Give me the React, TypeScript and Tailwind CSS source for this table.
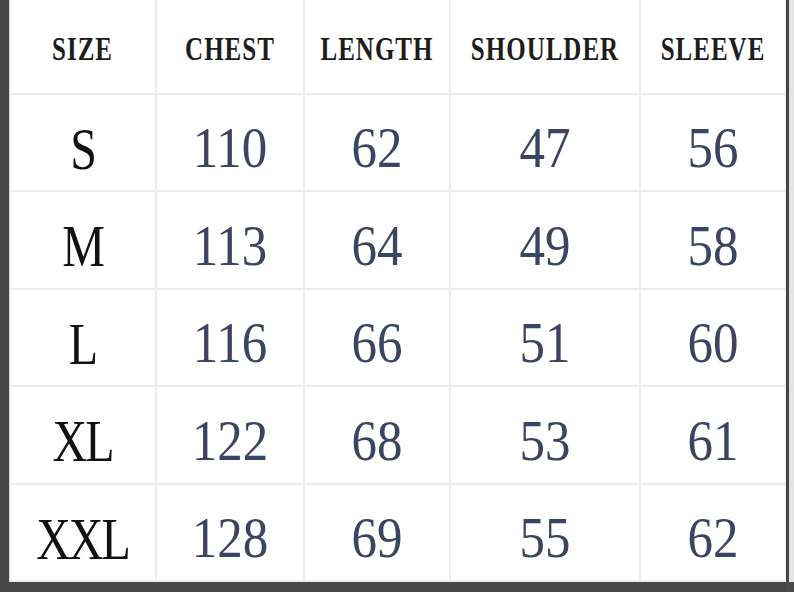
import React from "react";

const headers = ["SIZE", "CHEST", "LENGTH", "SHOULDER", "SLEEVE"];

const rows = [
  { size: "S", values: [110, 62, 47, 56] },
  { size: "M", values: [113, 64, 49, 58] },
  { size: "L", values: [116, 66, 51, 60] },
  { size: "XL", values: [122, 68, 53, 61] },
  { size: "XXL", values: [128, 69, 55, 62] },
];

const cell =
  "flex items-center justify-center border-r-2 border-b-2 border-[#ededed]";

const App = () => {
  return (
    <div className="flex w-[794px] h-[592px] bg-[#4a4a4a] overflow-hidden">
      <div className="w-[9px] shrink-0 bg-[#474747]" />
      <div className="flex flex-col">
        <div className="grid grid-cols-[147px_148px_146px_190px_146px] grid-rows-[95px_97px_98px_97px_98px_97px] bg-white border-l border-[#d9d9d9] w-[777px] h-[582px]">
          {headers.map((h) => (
            <div key={h} className={`${cell} pt-[3px]`}>
              <span className="font-['Liberation_Serif',serif] font-bold text-[25px] leading-none text-[#1d1d1d] scale-y-[1.33] tracking-[1px]">
                {h}
              </span>
            </div>
          ))}
          {rows.map((r) => (
            <React.Fragment key={r.size}>
              <div className={`${cell} pt-[12px]`}>
                <span className="font-['Liberation_Serif',serif] text-[48px] leading-none text-[#111111] scale-y-[1.25] tracking-[-2px]">
                  {r.size}
                </span>
              </div>
              {r.values.map((v, i) => (
                <div key={i} className={`${cell} pt-[12px]`}>
                  <span className="font-['Liberation_Serif',serif] text-[51px] leading-none text-[#3a4562] scale-y-[1.13]">
                    {v}
                  </span>
                </div>
              ))}
            </React.Fragment>
          ))}
        </div>
        <div className="h-[10px] bg-[#474747]" />
      </div>
      <div className="w-[3px] h-[582px] shrink-0 bg-[#444444]" />
      <div className="w-[5px] h-[582px] shrink-0 bg-[#e4e4e4]" />
    </div>
  );
};

export default App;
